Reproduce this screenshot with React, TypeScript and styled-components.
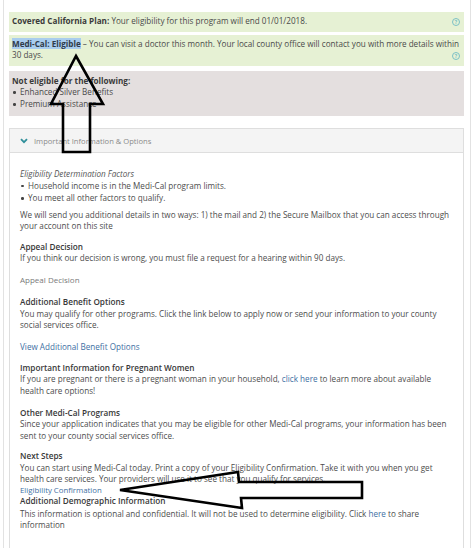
import React from 'react';
import styled, { createGlobalStyle } from 'styled-components';

const GlobalStyle = createGlobalStyle`
  html, body {
    margin: 0;
    padding: 0;
    background: #ffffff;
  }
  body {
    font-family: "Open Sans", "Noto Sans", Arial, sans-serif;
    font-size: 8.15px;
    color: #444;
  }
`;

const Page = styled.div`
  position: relative;
  width: 474px;
  height: 548px;
  overflow: hidden;
  background: #fff;
`;

const Frame = styled.div`
  margin: 0 3px 0 3px;
  border-left: 1px solid #e2e2e2;
  border-right: 1px solid #e2e2e2;
  padding: 12px 6px 0 5px;
  height: 548px;
  box-sizing: border-box;
`;

const Notice = styled.div<{ $tone: 'green' | 'grey'; $gap: number }>`
  background: ${({ $tone }) => ($tone === 'green' ? '#e6f1d4' : '#e4dfdf')};
  padding: ${({ $tone }) => ($tone === 'green' ? '3px 3px 5px 3px' : '4px 4px 6px 3px')};
  margin-bottom: ${({ $gap }) => $gap}px;
  line-height: 11.5px;
  color: #4a4a4a;
  &::after {
    content: '';
    display: block;
    clear: both;
  }
`;

const Strong = styled.b`
  font-weight: 700;
  color: #3a3a3a;
`;

const Highlight = styled.span`
  background: #a9cdee;
  font-weight: 700;
  color: #2f3b48;
`;

const HelpIcon = styled.span`
  float: right;
  display: inline-flex;
  align-items: center;
  justify-content: center;
  box-sizing: border-box;
  width: 8px;
  height: 8px;
  margin-top: 3px;
  margin-right: 1px;
  border-radius: 50%;
  border: 1px solid #7cc1c6;
  color: #7cc1c6;
  font-size: 5px;
  line-height: 1;
  font-weight: 700;
`;

const BulletList = styled.ul<{ $step: number }>`
  margin: 0;
  padding: 0;
  list-style: none;
  li {
    position: relative;
    padding-left: 8px;
    line-height: ${({ $step }) => $step}px;
  }
  li::before {
    content: '';
    position: absolute;
    left: 1px;
    top: 50%;
    width: 2.5px;
    height: 2.5px;
    margin-top: -1px;
    background: #444;
    border-radius: 50%;
  }
`;

const Panel = styled.div`
  border: 1px solid #dedede;
  border-bottom: none;
`;

const PanelHeader = styled.div`
  display: flex;
  align-items: center;
  gap: 6px;
  height: 23px;
  padding-left: 10px;
  background: #f4f4f4;
  border-bottom: 1px solid #dedede;
  color: #8a8a8a;
  font-size: 7.6px;
`;

const PanelBody = styled.div`
  padding: 15px 10px 40px 10px;
  line-height: 11.5px;
  color: #4d4d4d;
`;

const Italic = styled.div`
  font-style: italic;
  color: #555;
`;

const Para = styled.p<{ $mt?: number }>`
  margin: ${({ $mt }) => $mt ?? 0}px 0 0 0;
`;

const Title = styled.div<{ $mt?: number }>`
  margin-top: ${({ $mt }) => $mt ?? 10.5}px;
  font-weight: 600;
  color: #383838;
  font-size: 8.2px;
`;

const Muted = styled.div`
  margin-top: 10.5px;
  color: #7a7a7a;
  font-size: 8px;
`;

const Link = styled.a<{ $size?: number }>`
  color: #3e6fa3;
  text-decoration: none;
  ${({ $size }) => ($size ? `font-size: ${$size}px;` : '')}
`;

const LinkRow = styled.div<{ $mt?: number }>`
  margin-top: ${({ $mt }) => $mt ?? 0}px;
`;

const Overlay = styled.svg`
  position: absolute;
  left: 0;
  top: 0;
  pointer-events: none;
`;

const Chevron = () => (
  <svg width="8" height="6" viewBox="0 0 8 6">
    <path d="M1 1.2 L4 4.2 L7 1.2" fill="none" stroke="#2f8f9a" strokeWidth="1.8" />
  </svg>
);

export default function App() {
  return (
    <Page>
      <GlobalStyle />
      <Frame>
        <Notice $tone="green" $gap={3}>
          <Strong>Covered California Plan:</Strong> Your eligibility for this program will end 01/01/2018.
          <HelpIcon>?</HelpIcon>
        </Notice>
        <Notice $tone="green" $gap={5}>
          <Highlight>Medi-Cal: Eligible</Highlight> – You can visit a doctor this month. Your local county office will contact you with more details within 30 days.
          <HelpIcon>?</HelpIcon>
        </Notice>
        <Notice $tone="grey" $gap={12}>
          <Strong>Not eligible for the following:</Strong>
          <BulletList $step={12}>
            <li>Enhanced Silver Benefits</li>
            <li>Premium Assistance</li>
          </BulletList>
        </Notice>

        <Panel>
          <PanelHeader>
            <Chevron />
            <span>Important Information &amp; Options</span>
          </PanelHeader>
          <PanelBody>
            <Italic>Eligibility Determination Factors</Italic>
            <BulletList $step={12.5}>
              <li>Household income is in the Medi-Cal program limits.</li>
              <li>You meet all other factors to qualify.</li>
            </BulletList>
            <Para $mt={4}>
              We will send you additional details in two ways: 1) the mail and 2) the Secure Mailbox that you can access through your account on this site
            </Para>

            <Title $mt={9}>Appeal Decision</Title>
            <Para>If you think our decision is wrong, you must file a request for a hearing within 90 days.</Para>
            <Muted>Appeal Decision</Muted>

            <Title>Additional Benefit Options</Title>
            <Para>
              You may qualify for other programs. Click the link below to apply now or send your information to your county social services office.
            </Para>
            <LinkRow $mt={10.5}>
              <Link href="#">View Additional Benefit Options</Link>
            </LinkRow>

            <Title $mt={9}>Important Information for Pregnant Women</Title>
            <Para>
              If you are pregnant or there is a pregnant woman in your household, <Link href="#">click here</Link> to learn more about available health care options!
            </Para>

            <Title>Other Medi-Cal Programs</Title>
            <Para>
              Since your application indicates that you may be eligible for other Medi-Cal programs, your information has been sent to your county social services office.
            </Para>

            <Title $mt={9}>Next Steps</Title>
            <Para>
              You can start using Medi-Cal today. Print a copy of your Eligibility Confirmation. Take it with you when you get health care services. Your providers will use it to see that you qualify for services.
            </Para>
            <LinkRow $mt={-1}>
              <Link href="#" $size={7.8}>Eligibility Confirmation</Link>
            </LinkRow>
            <Title $mt={-1}>Additional Demographic Information</Title>
            <Para $mt={1}>
              This information is optional and confidential. It will not be used to determine eligibility. Click <Link href="#">here</Link> to share information
            </Para>
          </PanelBody>
        </Panel>
      </Frame>

      <Overlay width="474" height="548" viewBox="0 0 474 548">
        <path
          d="M76 56 L103 104 L90 104 L90 152 L63 152 L63 104 L51 104 Z"
          fill="none"
          stroke="#000"
          strokeWidth="2.6"
          strokeLinejoin="miter"
        />
        <path
          d="M120 490 L238 472 L239 482 L362 482 L362 498 L241 498 L242 508 Z"
          fill="none"
          stroke="#000"
          strokeWidth="2.6"
          strokeLinejoin="miter"
        />
      </Overlay>
    </Page>
  );
}
